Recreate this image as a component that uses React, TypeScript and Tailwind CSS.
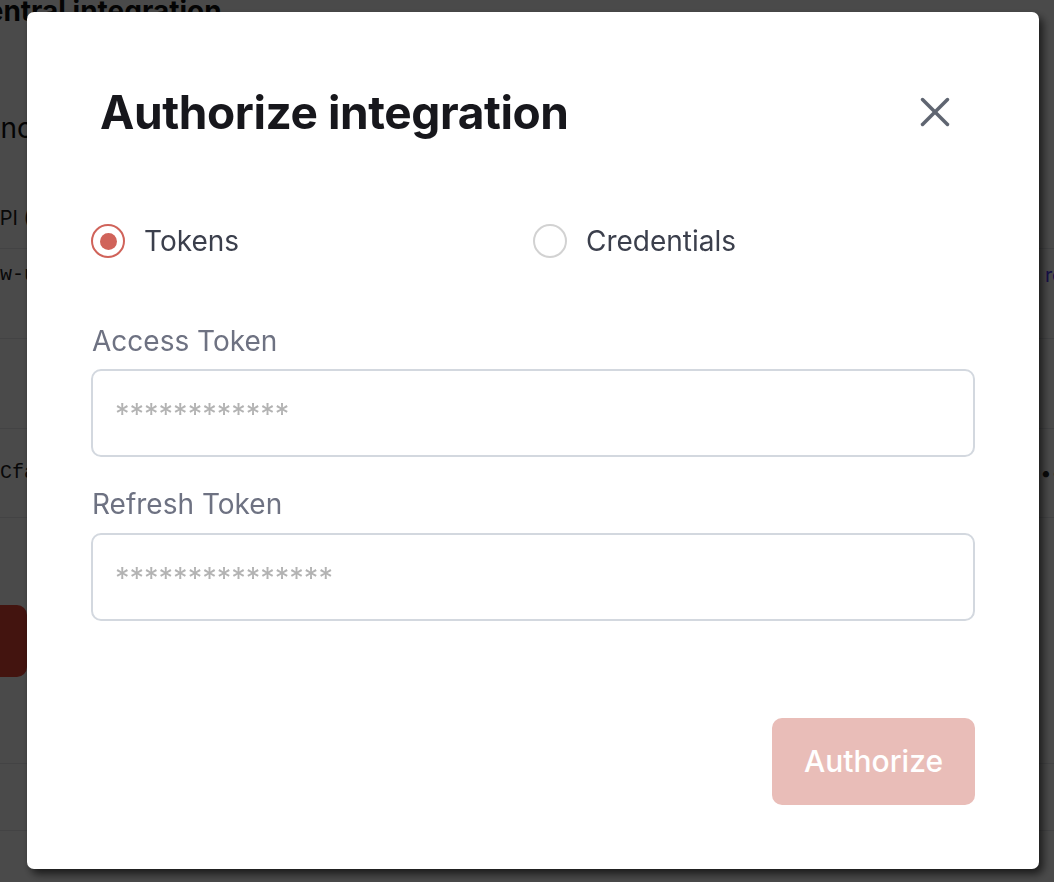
import React, { useState } from 'react';

function CloseIcon() {
  return (
    <svg width="30" height="30" viewBox="0 0 30 30" fill="none" stroke="#5f6571" strokeWidth="3.5" strokeLinecap="round">
      <path d="M2.5 2.5 27.5 27.5" />
      <path d="M27.5 2.5 2.5 27.5" />
    </svg>
  );
}

function Radio({ checked, label, onClick }: { checked: boolean; label: string; onClick: () => void }) {
  return (
    <button type="button" onClick={onClick} className="flex items-center gap-[19px] text-left">
      <span
        className={`w-[34px] h-[34px] rounded-full border-2 flex items-center justify-center ${
          checked ? 'border-[#d0635a]' : 'border-[#d2d2d2]'
        }`}
      >
        {checked && <span className="w-[17px] h-[17px] rounded-full bg-[#d0635a]" />}
      </span>
      <span className="text-[28px] leading-[34px] text-[#3b3f4c]">{label}</span>
    </button>
  );
}

export default function App() {
  const [mode, setMode] = useState<'tokens' | 'credentials'>('tokens');

  return (
    <div className="relative w-[1054px] h-[882px] overflow-hidden bg-white font-['Inter',sans-serif]">
      {/* page behind the dialog */}
      <div className="w-[1054px]">
        <h1 className="-mt-[10px] -ml-[34px] text-[28px] font-bold text-[#111]">Central integration</h1>
        <p className="mt-[75px] -ml-[21px] text-[28px] text-[#111]">Once connected</p>
        <p className="mt-[54px] -ml-[14px] text-[20px] text-[#222]">API (OAuth)</p>
        <div className="mt-[15px] border-t border-[#e5e7eb]" />
        <div className="h-[90px] flex items-start justify-between pt-[11px] border-b border-[#e5e7eb]">
          <span className="-ml-[24px] font-['Liberation_Mono',monospace] text-[20px] text-[#222]">raw-url</span>
          <span className="mr-[-46px] text-[20px] text-indigo-600">rotate</span>
        </div>
        <div className="h-[90px] border-b border-[#e5e7eb]" />
        <div className="h-[89px] flex items-center justify-between border-b border-[#e5e7eb]">
          <span className="-ml-[24px] font-['Liberation_Mono',monospace] text-[20px] text-[#222]">xtCfa9</span>
          <span className="mr-[-20px] text-[20px] text-[#222]">••••</span>
        </div>
        <div className="mt-[87px] -ml-[100px] w-[127px] h-[72px] rounded-[10px] bg-[#e64536]" />
        <div className="mt-[86px] border-t border-[#e5e7eb]" />
        <div className="mt-[66px] border-t border-[#e5e7eb]" />
      </div>

      {/* overlay */}
      <div className="fixed inset-0 bg-black/[0.71] pl-[27px] pt-[12px]">
        <div className="w-[1012px] h-[857px] bg-white rounded-[7px] shadow-[4px_5px_8px_rgba(0,0,0,0.65)] px-16 pt-[76px]">
          <div className="h-[48px] flex items-center justify-between">
            <h2 className="pl-[9px] text-[46px] leading-[48px] font-bold text-[#17171c] tracking-[-0.4px]">
              Authorize integration
            </h2>
            <button type="button" className="mr-[25px]">
              <CloseIcon />
            </button>
          </div>

          <div className="mt-[88px] grid grid-cols-2">
            <Radio checked={mode === 'tokens'} label="Tokens" onClick={() => setMode('tokens')} />
            <Radio checked={mode === 'credentials'} label="Credentials" onClick={() => setMode('credentials')} />
          </div>

          <label className="block mt-[66px] pl-px text-[28px] leading-[34px] text-[#6e7282]">Access Token</label>
          <input
            type="text"
            placeholder="************"
            className="mt-[11px] w-full h-[88px] rounded-[10px] border-2 border-[#d3d8df] px-[22px] text-[29px] outline-none placeholder:text-[#b3b3b3]"
          />

          <label className="block mt-[30px] pl-px text-[28px] leading-[34px] text-[#6e7282]">Refresh Token</label>
          <input
            type="text"
            placeholder="***************"
            className="mt-[12px] w-full h-[88px] rounded-[10px] border-2 border-[#d3d8df] px-[22px] text-[29px] outline-none placeholder:text-[#b3b3b3]"
          />

          <div className="mt-[97px] flex justify-end">
            <button
              type="button"
              disabled
              className="w-[203px] h-[87px] rounded-[10px] bg-[#e9bdb8] text-white text-[30px] font-medium"
            >
              Authorize
            </button>
          </div>
        </div>
      </div>
    </div>
  );
}
